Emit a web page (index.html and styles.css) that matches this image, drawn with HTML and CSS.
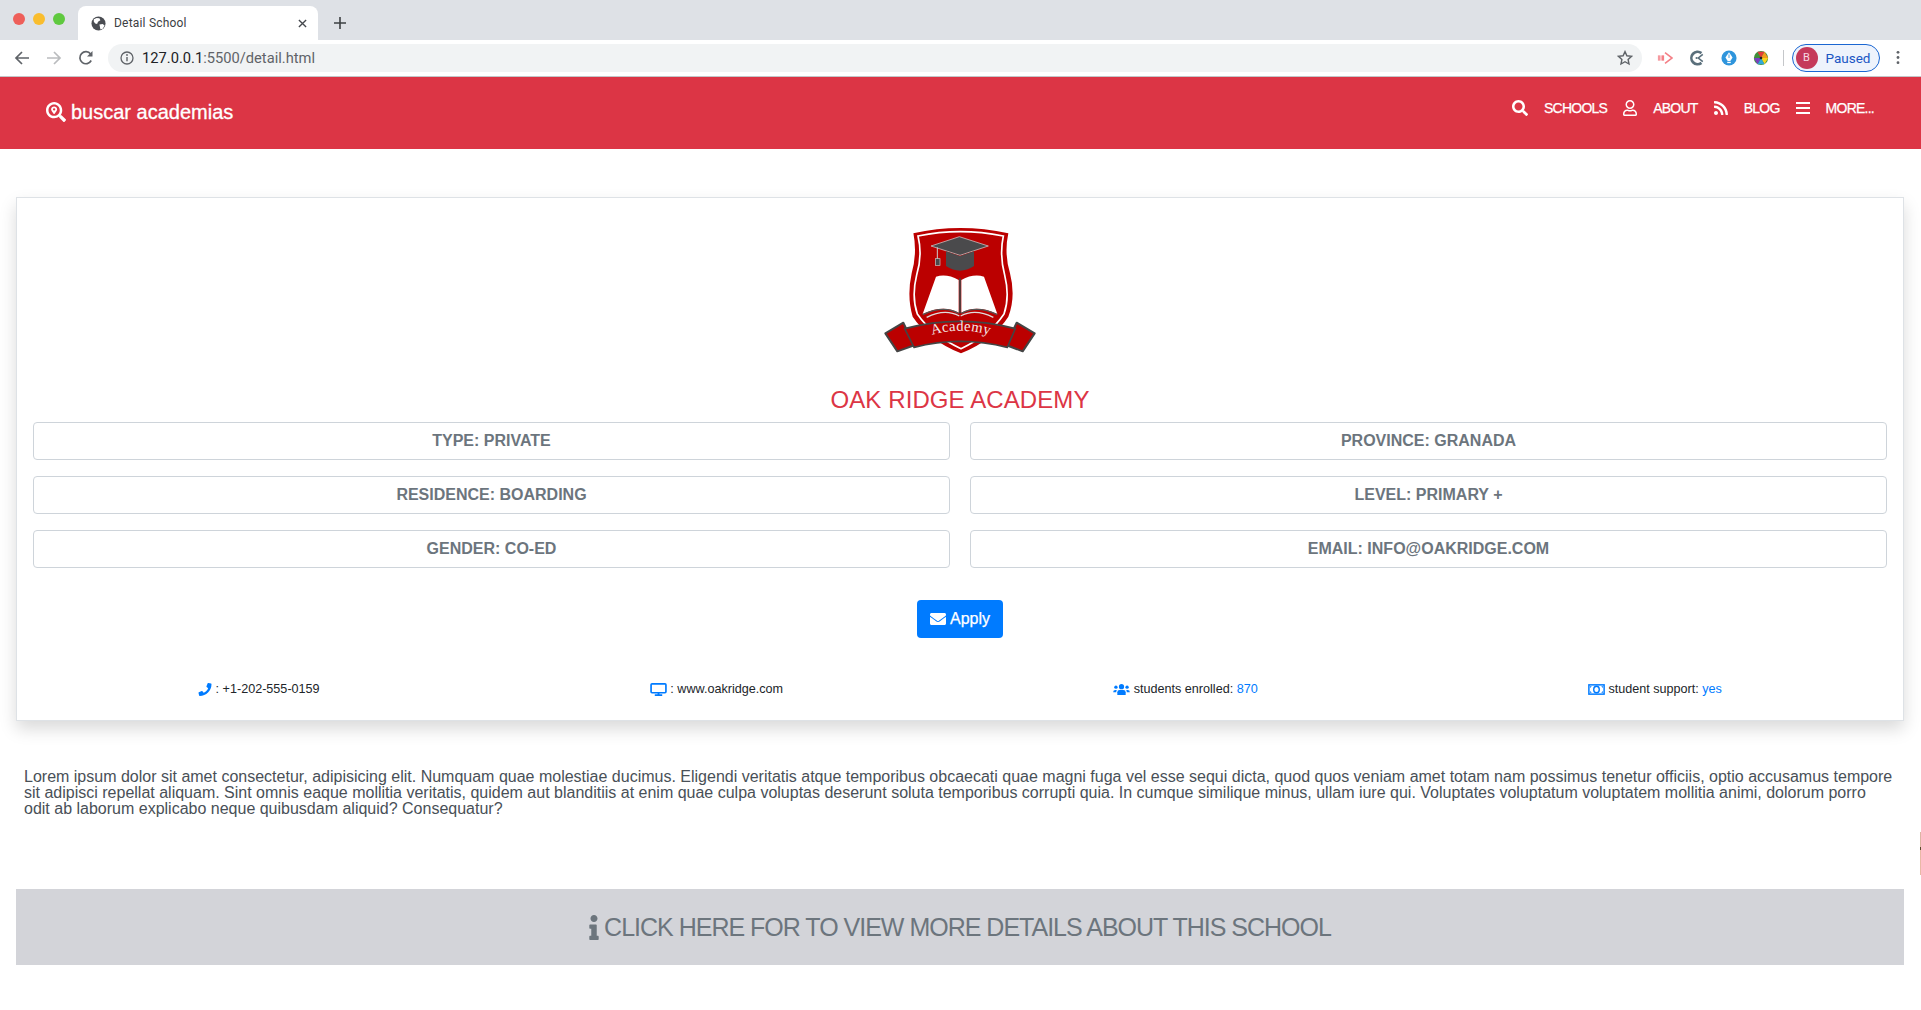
FILE: index.html
```html
<!DOCTYPE html>
<html lang="en">
<head>
<meta charset="utf-8">
<title>Detail School</title>
<link rel="stylesheet" href="styles.css">
</head>
<body>
<div class="tabstrip">
  <div class="lights"><span class="light red"></span><span class="light amber"></span><span class="light green"></span></div>
  <div class="tab">
    <svg class="favicon" viewBox="0 0 16 16"><circle cx="8" cy="8" r="7.5" fill="#4a4d52"/><path d="M3 3.5l3-1.5 3 .5 1 2-2.5 1.5-1 2.5-2 -.5-1.5-2zM9 9l3.5-.5 2 1.5-2 3.5-2.5 1-.5-3z" fill="#fff"/></svg>
    <span class="tab-title">Detail School</span>
    <svg class="tab-close" viewBox="0 0 10 10"><path d="M1 1l8 8M9 1l-8 8" stroke="#45484d" stroke-width="1.5" fill="none"/></svg>
  </div>
  <svg class="newtab" viewBox="0 0 12 12"><path d="M6 0v12M0 6h12" stroke="#3c4043" stroke-width="1.6" fill="none"/></svg>
</div>
<div class="toolbar">
  <svg class="tb-btn" viewBox="0 0 16 16"><path d="M15 8H2M8 2L2 8l6 6" stroke="#5f6368" stroke-width="1.7" fill="none"/></svg>
  <svg class="tb-btn" viewBox="0 0 16 16"><path d="M1 8h13M8 2l6 6-6 6" stroke="#babcbe" stroke-width="1.7" fill="none"/></svg>
  <svg class="tb-btn" viewBox="0 0 16 16"><path d="M13.2 10.5A6 6 0 1 1 12.6 4" stroke="#5f6368" stroke-width="1.7" fill="none"/><path d="M14.5 1v5.5H9z" fill="#5f6368"/></svg>
  <div class="omnibox">
    <svg class="info-ic" viewBox="0 0 14 14"><circle cx="7" cy="7" r="6" stroke="#5f6368" stroke-width="1.3" fill="none"/><path d="M7 6v4.2" stroke="#5f6368" stroke-width="1.4"/><circle cx="7" cy="4" r=".9" fill="#5f6368"/></svg>
    <span class="url"><span class="url-host">127.0.0.1</span>:5500/detail.html</span>
    <svg class="star" viewBox="0 0 16 16"><path d="M8 1.6l1.9 4.2 4.6.5-3.4 3.1.9 4.6L8 11.7 4 14l.9-4.6-3.4-3.1 4.6-.5z" stroke="#5f6368" stroke-width="1.4" fill="none"/></svg>
  </div>
  <svg class="ext ext-first" viewBox="0 0 18 18"><rect x="1" y="6" width="3" height="6" fill="#f59aa0"/><rect x="5" y="6" width="3" height="6" fill="#f47f86"/><path d="M9 3l8 6-8 6" stroke="#f47f86" stroke-width="1.8" fill="none"/></svg>
  <svg class="ext" viewBox="0 0 18 18"><path d="M14 3.5A7 7 0 1 0 14 14.500" stroke="#5a6f7b" stroke-width="3" fill="none"/><path d="M15.500 5l-5 4 5 4" stroke="#5a6f7b" stroke-width="1.800" fill="none"/><circle cx="8.500" cy="9" r="1.200" fill="#5a6f7b"/></svg>
  <svg class="ext" viewBox="0 0 18 18"><circle cx="9" cy="9" r="8.500" fill="#2f95dc"/><path d="M9 2.500l4 6-2.500 4h-3L5 8.500z" fill="#fff"/><path d="M7 14h4" stroke="#fff" stroke-width="1.500"/><path d="M9 5v4" stroke="#2f95dc" stroke-width="1"/></svg>
  <svg class="ext" viewBox="0 0 18 18"><circle cx="9" cy="9" r="8" fill="#3f8f3a"/><path d="M9 9L5 2l8 0z" fill="#e23b3b"/><path d="M9 9l4-7 4 7z" fill="#f39a1f"/><path d="M9 9h8l-4 7z" fill="#f6d51f"/><path d="M9 9l4 7H5z" fill="#31a8d8"/><path d="M9 9l-4 7-4-7z" fill="#7a3fc0"/><circle cx="9" cy="9" r="1.500" fill="#222"/></svg>
  <span class="tb-sep"></span>
  <div class="profile"><span class="avatar">B</span><span class="paused">Paused</span></div>
  <svg class="kebab" viewBox="0 0 4 16"><circle cx="2" cy="2.500" r="1.500"/><circle cx="2" cy="8" r="1.500"/><circle cx="2" cy="13.500" r="1.500"/></svg>
</div>

<nav class="navbar">
  <a class="brand">
    <svg class="brand-ic" viewBox="0 0 512 512"><path fill="#fff" d="M505 442.700L405.300 343c-4.500-4.500-10.600-7-17-7H372c27.600-35.300 44-79.700 44-128C416 93.100 322.900 0 208 0S0 93.100 0 208s93.100 208 208 208c48.300 0 92.700-16.400 128-44v16.300c0 6.400 2.500 12.500 7 17l99.700 99.700c9.400 9.400 24.600 9.400 33.900 0l28.300-28.300c9.400-9.400 9.400-24.600.1-34zM208 352c-79.500 0-144-64.500-144-144S128.500 64 208 64s144 64.500 144 144-64.500 144-144 144z"/><path fill="#fff" d="M208 112c-43 0-78 33-78 75 0 34 50 95 69 117 5 5 13 5 18 0 19-22 69-83 69-117 0-42-35-75-78-75zm0 105a30 30 0 1 1 0-60 30 30 0 0 1 0 60z"/></svg>
    buscar academias
  </a>
  <ul class="navlinks">
    <li><svg class="nav-ic" viewBox="0 0 512 512"><path fill="#fff" d="M505 442.700L405.300 343c-4.500-4.500-10.600-7-17-7H372c27.600-35.300 44-79.700 44-128C416 93.100 322.900 0 208 0S0 93.100 0 208s93.100 208 208 208c48.300 0 92.700-16.400 128-44v16.300c0 6.400 2.500 12.500 7 17l99.700 99.700c9.400 9.400 24.600 9.400 33.900 0l28.300-28.300c9.400-9.400 9.400-24.600.1-34zM208 336c-70.700 0-128-57.200-128-128 0-70.700 57.200-128 128-128 70.700 0 128 57.200 128 128 0 70.700-57.200 128-128 128z"/></svg><a>SCHOOLS</a></li>
    <li><svg class="nav-ic" viewBox="0 0 448 512"><path fill="#fff" d="M313.600 304c-28.700 0-42.500 16-89.600 16-47.100 0-60.800-16-89.600-16C60.200 304 0 364.200 0 438.400V464c0 26.500 21.500 48 48 48h352c26.500 0 48-21.500 48-48v-25.600c0-74.200-60.200-134.400-134.400-134.400zM400 464H48v-25.600c0-47.600 38.800-86.400 86.400-86.400 14.600 0 38.300 16 89.600 16 51.700 0 74.900-16 89.600-16 47.600 0 86.400 38.800 86.400 86.400V464zM224 288c79.500 0 144-64.500 144-144S303.500 0 224 0 80 64.500 80 144s64.500 144 144 144zm0-240c52.900 0 96 43.100 96 96s-43.100 96-96 96-96-43.100-96-96 43.100-96 96-96z"/></svg><a>ABOUT</a></li>
    <li><svg class="nav-ic" viewBox="0 0 448 512"><path fill="#fff" d="M128.081 415.959c0 35.369-28.672 64.041-64.041 64.041S0 451.328 0 415.959s28.672-64.041 64.041-64.041 64.040 28.673 64.040 64.041zm175.660 47.250c-8.354-154.600-132.185-278.587-286.950-286.950C7.656 175.765 0 183.105 0 192.253v48.069c0 8.415 6.490 15.472 14.887 16.018 111.832 7.284 201.473 96.702 208.772 208.772.547 8.397 7.604 14.887 16.018 14.887h48.069c9.149.001 16.489-7.655 15.995-16.790zm144.249.288C439.596 229.677 251.465 40.445 16.503 32.010 7.473 31.686 0 38.981 0 48.016v48.068c0 8.625 6.835 15.645 15.453 15.999 191.179 7.839 344.627 161.316 352.465 352.465.353 8.618 7.373 15.453 15.999 15.453h48.068c9.034-.001 16.329-7.474 16.005-16.504z"/></svg><a>BLOG</a></li>
    <li><svg class="nav-ic" viewBox="0 0 14 14"><path d="M0 2h14M0 7h14M0 12h14" stroke="#fff" stroke-width="2" fill="none"/></svg><a>MORE...</a></li>
  </ul>
</nav>

<main>
  <section class="card">
    <svg class="crest" viewBox="0 0 600 480" role="img" aria-label="Academy crest">
      <path d="M160 70 Q300 38 445 70 Q432 130 450 190 Q468 260 445 320 Q400 390 303 430 Q205 390 158 320 Q140 260 155 190 Q172 130 160 68Z" fill="#bb0000"/>
      <path d="M174 78 Q300 52 430 78 Q418 135 434 195 Q450 260 432 312 Q390 375 303 416 Q215 375 172 312 Q154 260 170 195 Q188 135 174 78Z" fill="none" stroke="#fff" stroke-width="5"/>
      <path d="M213 108L298 80 385 108 300 136Z" fill="#4a4a4c" stroke="#ddd" stroke-width="2"/>
      <path d="M258 124L300 138 342 124V168Q300 196 258 168Z" fill="#4a4a4c"/>
      <path d="M232 112V148" stroke="#ccc" stroke-width="3"/>
      <rect x="226" y="146" width="14" height="20" fill="#4a4a4c" stroke="#ccc" stroke-width="2"/>
      <path d="M296 210Q260 190 228 200L188 312Q250 282 296 308Z" fill="#fff"/>
      <path d="M304 210Q340 190 372 200L412 312Q350 282 304 308Z" fill="#fff"/>
      <path d="M188 314Q250 284 296 310M412 314Q350 284 304 310" fill="none" stroke="#555" stroke-width="4"/>
      <path d="M200 322Q255 294 298 318M400 322Q345 294 302 318" fill="none" stroke="#ddd" stroke-width="4"/>
      <path d="M300 205V310" stroke="#444" stroke-width="5"/>
      <path d="M130 338L76 370 112 424 165 405 150 380Z" fill="#bb0000" stroke="#444" stroke-width="6" stroke-linejoin="round"/>
      <path d="M470 338L524 370 488 424 438 405 450 380Z" fill="#bb0000" stroke="#444" stroke-width="6" stroke-linejoin="round"/>
      <path d="M134 356Q300 312 466 356L442 412Q300 376 162 412Z" fill="#bb0000" stroke="#444" stroke-width="5"/>
      <path id="ribbonLine" d="M190 384Q300 340 415 384" fill="none"/>
      <text class="crest-text"><textPath href="#ribbonLine" startOffset="50%" text-anchor="middle">Academy</textPath></text>
    </svg>
    <h1 class="school-name">OAK RIDGE ACADEMY</h1>
    <div class="fields">
      <div class="field">TYPE: PRIVATE</div>
      <div class="field">PROVINCE: GRANADA</div>
      <div class="field">RESIDENCE: BOARDING</div>
      <div class="field">LEVEL: PRIMARY +</div>
      <div class="field">GENDER: CO-ED</div>
      <div class="field">EMAIL: INFO@OAKRIDGE.COM</div>
    </div>
    <div class="apply-wrap">
      <a class="apply"><svg class="apply-ic" viewBox="0 0 512 512"><path fill="#fff" d="M502.300 190.800c3.900-3.100 9.700-.2 9.700 4.700V400c0 26.500-21.500 48-48 48H48c-26.500 0-48-21.500-48-48V195.600c0-5 5.700-7.800 9.700-4.700 22.400 17.400 52.100 39.500 154.100 113.600 21.100 15.400 56.700 47.800 92.200 47.600 35.700.3 72-32.800 92.300-47.600 102-74.100 131.600-96.300 154-113.700zM256 320c23.200.4 56.600-29.200 73.400-41.400 132.700-96.300 142.800-104.700 173.400-128.700 5.800-4.500 9.200-11.500 9.200-18.900v-19c0-26.500-21.500-48-48-48H48C21.500 64 0 85.500 0 112v19c0 7.400 3.400 14.300 9.200 18.900 30.600 23.900 40.700 32.400 173.400 128.700 16.800 12.200 50.200 41.800 73.400 41.400z"/></svg>Apply</a>
    </div>
    <div class="contacts">
      <span class="contact"><svg class="c-ic" viewBox="0 0 512 512"><path fill="#007bff" d="M493.400 24.600l-104-24c-11.300-2.600-22.900 3.300-27.500 13.900l-48 112c-4.200 9.800-1.400 21.300 6.900 28l60.600 49.600c-36 76.700-98.900 140.500-177.200 177.200l-49.600-60.600c-6.800-8.300-18.200-11.100-28-6.900l-112 48C3.900 366.500-2 378.100.6 389.400l24 104C27.100 504.200 36.700 512 48 512c256.100 0 464-207.500 464-464 0-11.200-7.700-20.900-18.600-23.400z"/></svg> : +1-202-555-0159</span>
      <span class="contact"><svg class="c-ic c-wide" viewBox="0 0 18 14"><rect x="1" y="1" width="16" height="9.500" rx="1" stroke="#007bff" stroke-width="1.800" fill="none"/><path d="M5 13h8M9 10.500V13" stroke="#007bff" stroke-width="2" fill="none"/></svg> : www.oakridge.com</span>
      <span class="contact"><svg class="c-ic c-wide" viewBox="0 0 18 14"><circle cx="9" cy="4" r="2.800" fill="#007bff"/><circle cx="3" cy="4.500" r="1.800" fill="#007bff"/><circle cx="15" cy="4.500" r="1.800" fill="#007bff"/><path d="M4.500 13V10Q4.500 7.500 7 7.500H11Q13.500 7.500 13.500 10V13Z" fill="#007bff"/><path d="M0 10Q0 7.500 2.500 7.500H4Q3.300 8.500 3.300 10H0ZM18 10Q18 7.500 15.500 7.500H14Q14.700 8.500 14.700 10H18Z" fill="#007bff"/></svg> students enrolled: <span class="val">870</span></span>
      <span class="contact"><svg class="c-ic c-wide" viewBox="0 0 18 14"><rect x=".8" y="2" width="16.400" height="10" fill="none" stroke="#007bff" stroke-width="1.600"/><ellipse cx="9" cy="7" rx="3" ry="3.500" fill="none" stroke="#007bff" stroke-width="1.500"/><path d="M2 3.500h2L2 5.500zM16 3.500h-2L16 5.500zM2 10.500h2L2 8.500zM16 10.500h-2L16 8.500z" fill="#007bff"/></svg> student support: <span class="val">yes</span></span>
    </div>
  </section>

  <p class="lorem">Lorem ipsum dolor sit amet consectetur, adipisicing elit. Numquam quae molestiae ducimus. Eligendi veritatis atque temporibus obcaecati quae magni fuga vel esse sequi dicta, quod quos veniam amet totam nam possimus tenetur officiis, optio accusamus tempore sit adipisci repellat aliquam. Sint omnis eaque mollitia veritatis, quidem aut blanditiis at enim quae culpa voluptas deserunt soluta temporibus corrupti quia. In cumque similique minus, ullam iure qui. Voluptates voluptatum voluptatem mollitia animi, dolorum porro odit ab laborum explicabo neque quibusdam aliquid? Consequatur?</p>

  <a class="more"><svg class="more-ic" viewBox="0 0 192 512"><path fill="#6c757d" d="M20 424.229h20V279.771H20c-11.046 0-20-8.954-20-20V212c0-11.046 8.954-20 20-20h112c11.046 0 20 8.954 20 20v212.229h20c11.046 0 20 8.954 20 20V492c0 11.046-8.954 20-20 20H20c-11.046 0-20-8.954-20-20v-47.771c0-11.046 8.954-20 20-20zM96 0C56.235 0 24 32.235 24 72s32.235 72 72 72 72-32.235 72-72S135.764 0 96 0z"/></svg>CLICK HERE FOR TO VIEW MORE DETAILS ABOUT THIS SCHOOL</a>
</main>
<span class="edge-mark"></span>
</body>
</html>
```

FILE: styles.css
```css
* { box-sizing: border-box; }
html, body { margin: 0; padding: 0; background: #fff; }
body { position: relative; font-family: "Liberation Sans", Arial, sans-serif; color: #212529; width: 1921px; height: 1010px; overflow: hidden; }

.tabstrip { height: 40px; background: #dee1e6; display: flex; align-items: flex-end; padding-left: 13px; }
.lights { display: flex; gap: 8px; align-self: flex-start; margin-top: 13px; }
.light { width: 12px; height: 12px; border-radius: 50%; }
.light.red { background: #ee5f5a; }
.light.amber { background: #f9bd2e; }
.light.green { background: #5fc93f; }
.tab { width: 240px; height: 34px; margin-left: 13px; background: #fff; border-radius: 8px 8px 0 0; display: flex; align-items: center; padding: 0 13px; }
.favicon { width: 15px; height: 15px; flex: none; }
.tab-title { font: 12px "Roboto", "Liberation Sans", sans-serif; color: #3c4043; margin-left: 8px; flex: 1; letter-spacing: .2px; }
.tab-close { width: 9px; height: 9px; flex: none; margin-right: -2px; }
.newtab { width: 12px; height: 12px; margin: 0 0 11px 16px; }

.toolbar { height: 37px; background: #fff; border-bottom: 1px solid #c4c5c8; display: flex; align-items: center; padding: 0 0 1px 14px; }
.tb-btn { width: 16px; height: 16px; margin-right: 16px; flex: none; }
.omnibox { width: 1534px; height: 28px; margin-left: -2px; background: #f1f3f4; border-radius: 14px; display: flex; align-items: center; padding: 0 8px 0 12px; }
.info-ic { width: 14px; height: 14px; flex: none; }
.url { font: 14.700px "Roboto", "Liberation Sans", sans-serif; color: #5f6368; margin-left: 8px; flex: 1; }
.url-host { color: #202124; }
.star { width: 16px; height: 16px; flex: none; margin-right: 1px; }
.ext { width: 16px; height: 16px; flex: none; margin-right: 16px; }
.ext-first { margin-left: 15px; }
.tb-sep { width: 1px; height: 16px; background: #c5c7ca; margin: 0 8px 0 -2px; }
.profile { width: 88px; height: 28px; border: 1.500px solid #1a66d2; background: #eef3fc; border-radius: 14px; display: flex; align-items: center; padding-left: 2.500px; }
.avatar { width: 22px; height: 22px; border-radius: 50%; background: #c5395a; color: #f7d9e0; font: 11px "Roboto", sans-serif; display: flex; align-items: center; justify-content: center; }
.paused { font: 13.500px "Roboto", "Liberation Sans", sans-serif; color: #1a56c4; margin-left: 8px; }
.kebab { width: 4px; height: 15px; fill: #5f6368; margin-left: 16px; }

.navbar { height: 72px; background: #dc3545; display: flex; align-items: center; justify-content: space-between; padding: 0 47px 0 46px; color: #fff; }
.brand { display: flex; align-items: center; gap: 5px; font-size: 20px; color: #fff; -webkit-text-stroke: .3px #fff; margin-bottom: 2px; }
.brand-ic { width: 20px; height: 20px; }
.navlinks { list-style: none; display: flex; gap: 16px; margin: 0 0 11px; padding: 0; font-size: 14px; letter-spacing: -.75px; -webkit-text-stroke: .25px #fff; }
.navlinks li { display: flex; align-items: center; gap: 16px; }
.nav-ic { width: 14px; height: 16px; flex: none; }
.navlinks li:first-child .nav-ic { width: 16px; }

main { padding: 0 17px 0 16px; }
.card { margin-top: 48px; height: 524px; border: 1px solid #dee2e6; background: #fff; box-shadow: 0 8px 16px rgba(0,0,0,.15); padding: 12px 16px 0; }
.crest { display: block; width: 200px; height: 160px; margin: 0 auto; }
.crest-text { font: 44px "Liberation Serif", serif; fill: #f3e6e6; letter-spacing: 1px; }
.school-name { margin: 15px 0 8px; font-size: 24px; font-weight: 400; line-height: 29px; color: #dc3545; text-align: center; letter-spacing: .1px; }
.fields { display: grid; grid-template-columns: 1fr 1fr; column-gap: 20px; row-gap: 16px; }
.field { height: 38px; border: 1px solid #ced4da; border-radius: 4px; display: flex; align-items: center; justify-content: center; color: #6c757d; font-size: 16px; font-weight: 700; }
.apply-wrap { display: flex; justify-content: center; margin-top: 32px; }
.apply { width: 86px; height: 38px; border-radius: 4px; background: #007bff; color: #fff; font-size: 16px; display: flex; align-items: center; justify-content: center; gap: 4px; -webkit-text-stroke: .25px #fff; }
.apply-ic { width: 16px; height: 16px; }
.contacts { display: flex; justify-content: space-around; margin-top: 42px; font-size: 12.600px; line-height: 18px; }
.contact { display: flex; align-items: center; white-space: pre; }
.c-ic { width: 14px; height: 13px; flex: none; }
.c-wide { width: 17px; }
.val { color: #007bff; }

.lorem { margin: 48px 0 0; padding: 0 8px; font-size: 16px; line-height: 16px; color: #495057; }
.more { margin-top: 72px; height: 76px; background: #d3d4d9; color: #6c757d; font-size: 25px; letter-spacing: -1px; display: flex; align-items: center; justify-content: center; gap: 5px; }
.more-ic { width: 10px; height: 25px; }

.edge-mark { position: absolute; left: 1920px; top: 832px; width: 1px; height: 43px; background: linear-gradient(#dcb5a3 0 35%, #5a4a2a 35% 42%, #e8b9a5 42% 100%); }
```
